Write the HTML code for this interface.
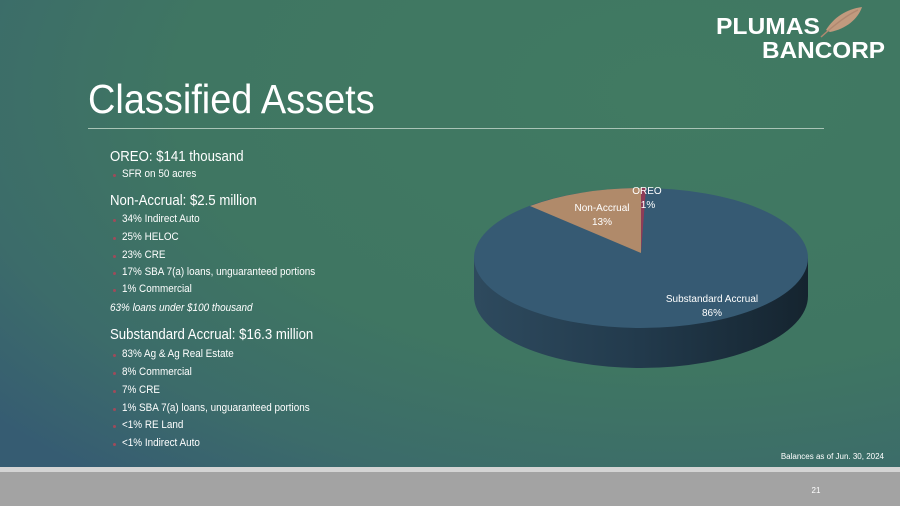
<!DOCTYPE html>
<html><head><meta charset="utf-8"><style>
body{margin:0;width:900px;height:506px;overflow:hidden;font-family:"Liberation Sans",sans-serif;}
#bg{position:absolute;left:0;top:0;width:900px;height:467px;background:radial-gradient(ellipse 900px 500px at 75% 20%,#417a62 0%,#3f7662 55%,#3c6c6a 80%,#365c72 100%);}
#strip{position:absolute;left:0;top:467px;width:900px;height:5px;background:#d4d4d4;}
#foot{position:absolute;left:0;top:472px;width:900px;height:34px;background:#a3a3a3;}
.t{position:absolute;color:#fff;white-space:nowrap;transform-origin:0 50%;}
.h{font-size:15px;transform:scaleX(0.88);}
.b{font-size:11px;transform:scaleX(0.9);left:122px;}
.d{position:absolute;left:113px;width:3px;height:3px;border-radius:50%;background:#a04a5a;}
</style></head><body>
<div id="bg"></div><div id="strip"></div><div id="foot"></div>
<div class="t" style="left:88px;top:74px;font-size:41px;transform:scaleX(0.925);line-height:50px;">Classified Assets</div>
<div style="position:absolute;left:88px;top:128px;width:736px;height:1px;background:#a9c4b6;"></div>

<div class="t h" style="left:110px;top:148px">OREO: $141 thousand</div>
<div class="d" style="top:174px"></div><div class="t b" style="top:168px">SFR on 50 acres</div>
<div class="t h" style="left:110px;top:192px">Non-Accrual: $2.5 million</div>
<div class="d" style="top:219px"></div><div class="t b" style="top:213px">34% Indirect Auto</div>
<div class="d" style="top:237px"></div><div class="t b" style="top:231px">25% HELOC</div>
<div class="d" style="top:255px"></div><div class="t b" style="top:249px">23% CRE</div>
<div class="d" style="top:272px"></div><div class="t b" style="top:266px">17% SBA 7(a) loans, unguaranteed portions</div>
<div class="d" style="top:289px"></div><div class="t b" style="top:283px">1% Commercial</div>
<div class="t" style="left:110px;top:302px;font-size:11px;font-style:italic;transform:scaleX(0.9)">63% loans under $100 thousand</div>
<div class="t h" style="left:110px;top:326px">Substandard Accrual: $16.3 million</div>
<div class="d" style="top:354px"></div><div class="t b" style="top:348px">83% Ag &amp; Ag Real Estate</div>
<div class="d" style="top:372px"></div><div class="t b" style="top:366px">8% Commercial</div>
<div class="d" style="top:390px"></div><div class="t b" style="top:384px">7% CRE</div>
<div class="d" style="top:408px"></div><div class="t b" style="top:402px">1% SBA 7(a) loans, unguaranteed portions</div>
<div class="d" style="top:425px"></div><div class="t b" style="top:419px">&lt;1% RE Land</div>
<div class="d" style="top:443px"></div><div class="t b" style="top:437px">&lt;1% Indirect Auto</div>

<svg style="position:absolute;left:0;top:0" width="900" height="506">
<defs><linearGradient id="sg" x1="0" x2="1" y1="0" y2="0">
<stop offset="0" stop-color="#2e4a5e"/><stop offset="0.5" stop-color="#223a4c"/><stop offset="1" stop-color="#15242f"/></linearGradient></defs>
<path d="M474,258 L474,296 A167,72 0 0 0 808,296 L808,258 Z" fill="url(#sg)"/>
<ellipse cx="641" cy="258" rx="167" ry="70" fill="#365a73"/>
<path d="M641,253 L641,188 A167,70 0 0 0 530,206 Z" fill="#b08a6a"/>
<path d="M641,253 L641,188 A167,70 0 0 1 646,188 Z" fill="#8e3c57"/>
<g fill="#fff" font-family="Liberation Sans,sans-serif" font-size="10" text-anchor="middle">
<text x="647" y="194">OREO</text><text x="648" y="208">1%</text>
<text x="602" y="211">Non-Accrual</text><text x="602" y="225">13%</text>
<text x="712" y="302">Substandard Accrual</text><text x="712" y="316">86%</text>
</g>
<text x="884" y="459" fill="#fff" font-family="Liberation Sans,sans-serif" font-size="8" text-anchor="end">Balances as of Jun. 30, 2024</text>
<text x="816" y="493" fill="#fff" font-family="Liberation Sans,sans-serif" font-size="8" text-anchor="middle">21</text>
<g font-family="Liberation Sans,sans-serif" font-weight="bold" fill="#fff">
<text x="716" y="34" font-size="23" textLength="104" lengthAdjust="spacingAndGlyphs">PLUMAS</text>
<text x="762" y="58" font-size="23" textLength="123" lengthAdjust="spacingAndGlyphs">BANCORP</text>
</g>
<path d="M826,30 C834,17 847,9 862,7 C858,19 846,29 830,32 Z" fill="#c19a7e"/>
<path d="M821,37 C832,27 845,16 858,10" stroke="#b08870" stroke-width="1.5" fill="none"/>
</svg>
</body></html>
